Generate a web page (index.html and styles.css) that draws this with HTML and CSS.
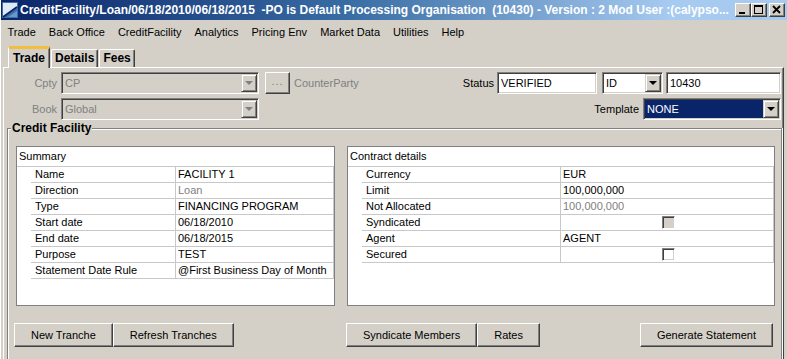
FILE: index.html
```html
<!DOCTYPE html>
<html lang="en">
<head>
    <meta charset="UTF-8">
    <title>CreditFacility</title>
    <link rel="stylesheet" href="styles.css">
</head>
<body>
<div class="window">
    <div class="titlebar">
        <svg class="app-icon" width="16" height="16" viewBox="0 0 16 16">
            <rect x="0" y="0" width="16" height="16" fill="#3a6ea5"/>
            <path d="M1 1 H15 V6 L3 14 H1 Z" fill="#dfe9f5"/>
            <path d="M1 15 L15 5" stroke="#0a246a" stroke-width="2"/>
            <path d="M6 15 L15 9 V15 Z" fill="#6b98cc"/>
        </svg>
        <span class="title">CreditFacility/Loan/06/18/2010/06/18/2015&nbsp; -PO is Default Processing Organisation&nbsp; (10430) - Version : 2 Mod User :(calypso...</span>
        <div class="wbtns">
            <span class="wbtn"><svg width="14" height="12" viewBox="0 0 14 12"><rect x="3" y="8" width="6" height="2" fill="#000"/></svg></span>
            <span class="wbtn"><svg width="14" height="12" viewBox="0 0 14 12"><rect x="2.5" y="1.5" width="8" height="8" fill="none" stroke="#000"/><rect x="2" y="1" width="9" height="2" fill="#000"/></svg></span>
            <span class="wbtn close"><svg width="14" height="12" viewBox="0 0 14 12"><path d="M3 2 L10 9 M10 2 L3 9" stroke="#000" stroke-width="1.8"/></svg></span>
        </div>
    </div>

    <div class="menubar">
        <span class="menu">Trade</span>
        <span class="menu">Back Office</span>
        <span class="menu">CreditFacility</span>
        <span class="menu">Analytics</span>
        <span class="menu">Pricing Env</span>
        <span class="menu">Market Data</span>
        <span class="menu">Utilities</span>
        <span class="menu">Help</span>
    </div>

    <div class="tabs">
        <div class="tab active">Trade</div>
        <div class="tab">Details</div>
        <div class="tab">Fees</div>
    </div>

    <div class="tabpanel">
        <div class="form-row">
            <div class="group">
                <span class="lbl left off">Cpty</span>
                <div class="combo sunken off wide"><span class="combo-text">CP</span><span class="drop"><i></i></span></div>
                <span class="btn dots">...</span>
                <span class="off cp-name">CounterParty</span>
            </div>
            <div class="group">
                <span class="lbl">Status</span>
                <div class="field sunken status">VERIFIED</div>
                <div class="combo sunken id-type"><span class="combo-text">ID</span><span class="drop"><i></i></span></div>
                <div class="field sunken trade-id">10430</div>
            </div>
        </div>
        <div class="form-row">
            <div class="group">
                <span class="lbl left off">Book</span>
                <div class="combo sunken off wide"><span class="combo-text">Global</span><span class="drop"><i></i></span></div>
            </div>
            <div class="group">
                <span class="lbl tpl">Template</span>
                <div class="combo sunken template"><span class="combo-text">NONE</span><span class="drop"><i></i></span></div>
            </div>
        </div>

        <fieldset class="facility">
            <legend>Credit Facility</legend>
            <div class="panels">
                <div class="panel summary">
                    <div class="panel-head">Summary</div>
                    <div class="props">
                        <div class="prop"><span class="k">Name</span><span class="v">FACILITY 1</span></div>
                        <div class="prop"><span class="k">Direction</span><span class="v off">Loan</span></div>
                        <div class="prop"><span class="k">Type</span><span class="v">FINANCING PROGRAM</span></div>
                        <div class="prop"><span class="k">Start date</span><span class="v">06/18/2010</span></div>
                        <div class="prop"><span class="k">End date</span><span class="v">06/18/2015</span></div>
                        <div class="prop"><span class="k">Purpose</span><span class="v">TEST</span></div>
                        <div class="prop"><span class="k">Statement Date Rule</span><span class="v">@First Business Day of Month</span></div>
                    </div>
                </div>
                <div class="panel contract">
                    <div class="panel-head">Contract details</div>
                    <div class="props">
                        <div class="prop"><span class="k">Currency</span><span class="v">EUR</span></div>
                        <div class="prop"><span class="k">Limit</span><span class="v">100,000,000</span></div>
                        <div class="prop"><span class="k">Not Allocated</span><span class="v off">100,000,000</span></div>
                        <div class="prop"><span class="k">Syndicated</span><span class="v check-cell"><span class="check off"></span></span></div>
                        <div class="prop"><span class="k">Agent</span><span class="v">AGENT</span></div>
                        <div class="prop"><span class="k">Secured</span><span class="v check-cell"><span class="check"></span></span></div>
                    </div>
                </div>
            </div>
            <div class="actions">
                <div class="btn-group left-btns">
                    <span class="btn">New Tranche</span>
                    <span class="btn">Refresh Tranches</span>
                </div>
                <div class="btn-group right-btns">
                    <div class="btn-group">
                        <span class="btn">Syndicate Members</span>
                        <span class="btn">Rates</span>
                    </div>
                    <span class="btn">Generate Statement</span>
                </div>
            </div>
        </fieldset>
    </div>
</div>
</body>
</html>
```

FILE: styles.css
```css
* {
    box-sizing: border-box;
}

body {
    margin: 0;
    width: 787px;
    height: 359px;
    overflow: hidden;
    background: #d4d0c8;
    font-family: "Liberation Sans", Arial, sans-serif;
    font-size: 11px;
    color: #000;
}

.window {
    height: 359px;
    overflow: hidden;
    border-left: 1px solid #fff;
}

/* title bar */
.titlebar {
    height: 20px;
    display: flex;
    align-items: center;
    padding: 0 2px 0 1px;
    background: linear-gradient(to right, #0a246a 0%, #3a6ea5 45%, #a6caf0 85%);
    color: #fff;
    font-weight: bold;
    font-size: 12px;
}

.app-icon {
    flex: none;
    margin-right: 2px;
}

.title {
    flex: 1;
    white-space: nowrap;
    overflow: hidden;
}

.wbtns {
    display: flex;
    flex: none;
}

.wbtn {
    width: 16px;
    height: 14px;
    background: #d4d0c8;
    border: 1px solid;
    border-color: #fff #404040 #404040 #fff;
    box-shadow: inset -1px -1px #808080;
}

.wbtn svg {
    display: block;
}

.wbtn.close {
    margin-left: 2px;
}

/* menu */
.menubar {
    height: 24px;
    display: flex;
    align-items: center;
}

.menu {
    padding: 0 6.5px;
}

/* tabs */
.tabs {
    height: 21px;
    margin-top: 2px;
    padding-left: 7px;
    display: flex;
    align-items: flex-end;
}

.tab {
    height: 18px;
    padding: 0 3px;
    border-left: 1px solid #fff;
    border-top: 1px solid #fff;
    border-right: 1px solid #404040;
    box-shadow: inset -1px 0 #808080;
    border-radius: 2px 2px 0 0;
    font-weight: bold;
    font-size: 12px;
    line-height: 17px;
}

.tab.active {
    height: 22px;
    margin-bottom: -1px;
    padding: 0 4px;
    border-top: 3px solid #f3bd3e;
    background: #d4d0c8;
    position: relative;
    z-index: 1;
    line-height: 19px;
}

.tab + .tab {
    margin-left: 1px;
}

.tabpanel {
    height: 292px;
    overflow: hidden;
    margin: 0 3px 0 2px;
    padding: 4px 2px 0 0;
    border-top: 1px solid #fff;
    border-left: 1px solid #fff;
    border-right: 1px solid #404040;
    box-shadow: inset -1px 0 #808080;
}

/* top form */
.form-row {
    height: 22px;
    display: flex;
    justify-content: space-between;
    align-items: center;
}

.form-row + .form-row {
    margin-top: 4px;
}

.group {
    display: flex;
    align-items: center;
    height: 22px;
}

.off {
    color: #808080;
}

.lbl.left {
    width: 53px;
    margin-right: 4px;
    text-align: right;
}

.lbl {
    margin-right: 3px;
}

.lbl.tpl {
    margin-right: 4px;
}

.sunken {
    border: 1px solid;
    border-color: #808080 #fff #fff #808080;
    box-shadow: inset 1px 1px #404040, inset -1px -1px #d4d0c8;
    padding: 1px;
}

.field {
    height: 22px;
    background: #fff;
    padding-left: 3px;
    line-height: 18px;
}

.status {
    width: 100px;
}

.trade-id {
    width: 115px;
    margin-left: 3px;
}

.combo {
    height: 22px;
    display: flex;
    background: #fff;
}

.combo.off {
    background: #d4d0c8;
}

.combo.wide {
    width: 198px;
}

.combo.id-type {
    width: 61px;
    margin-left: 5px;
}

.combo.template {
    width: 138px;
}

.combo-text {
    flex: 1;
    padding-left: 2px;
    line-height: 18px;
}

.template .combo-text {
    background: #0a246a;
    color: #fff;
}

.drop {
    width: 16px;
    height: 18px;
    display: flex;
    align-items: center;
    justify-content: center;
    background: #d4d0c8;
    border: 1px solid;
    border-color: #d4d0c8 #404040 #404040 #d4d0c8;
    box-shadow: inset 1px 1px #fff, inset -1px -1px #808080;
}

.drop i {
    width: 0;
    height: 0;
    border-left: 4px solid transparent;
    border-right: 4px solid transparent;
    border-top: 4px solid #000;
}

.off .drop i {
    border-top-color: #808080;
}

.btn {
    display: inline-flex;
    align-items: center;
    justify-content: center;
    height: 24px;
    padding: 0 16px;
    background: #d4d0c8;
    border: 1px solid;
    border-color: #fff #404040 #404040 #fff;
    box-shadow: inset -1px -1px #808080;
    white-space: nowrap;
}

.btn.dots {
    width: 25px;
    height: 22px;
    padding: 0 0 4px;
    margin-left: 6px;
    color: #808080;
    letter-spacing: 1px;
}

.cp-name {
    margin-left: 4px;
}

/* credit facility box */
.facility {
    height: 238px;
    margin: 1px 1px 0 3px;
    padding: 10px 6px 0 8px;
    border: 1px solid #808080;
    border-bottom: none;
    box-shadow: inset 1px 1px #fff, 1px 0 #fff;
}

.facility legend {
    margin-left: -5px;
    padding: 0 1px;
    font-weight: bold;
    font-size: 12px;
    line-height: 15px;
    background: #d4d0c8;
}

.panels,
.actions {
    display: grid;
    grid-template-columns: 319px 428px;
    column-gap: 12px;
}

.panel {
    height: 160px;
    background: #fff;
    border: 1px solid #808080;
}

.panel-head {
    height: 20px;
    padding-left: 2px;
    line-height: 19px;
    border-bottom: 1px solid #c8c8c8;
}

.props {
    margin-left: 14px;
    border-right: 1px solid #c8c8c8;
}

.prop {
    height: 16px;
    display: grid;
    border-bottom: 1px solid #c8c8c8;
    line-height: 15px;
}

.summary .prop {
    grid-template-columns: 145px 1fr;
}

.contract .prop {
    grid-template-columns: 199px 1fr;
}

.k {
    padding-left: 4px;
    border-right: 1px solid #c8c8c8;
}

.v {
    padding-left: 2px;
    white-space: nowrap;
}

.check-cell {
    display: flex;
    align-items: center;
    justify-content: center;
}

.check {
    width: 13px;
    height: 13px;
    background: #fff;
    border: 1px solid;
    border-color: #808080 #fff #fff #808080;
    box-shadow: inset 1px 1px #404040, inset -1px -1px #d4d0c8;
}

.check.off {
    background: #d4d0c8;
}

/* buttons */
.actions {
    margin-top: 17px;
}

.btn-group {
    display: flex;
}

.left-btns {
    margin-left: -2px;
}

.right-btns {
    justify-content: space-between;
    margin: 0 2px 0 -1px;
}
```
